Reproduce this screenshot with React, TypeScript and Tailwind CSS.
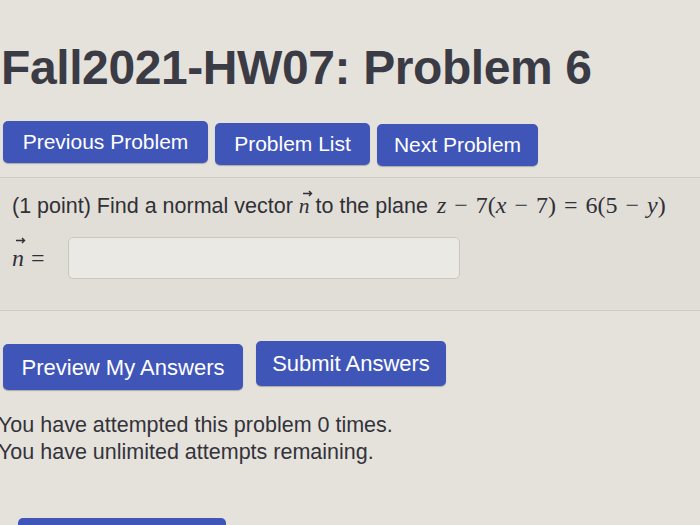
import React from "react";

const btn =
  "rounded-[5px] bg-[#3f56b8] text-white font-['Liberation_Sans',Arial,sans-serif] shadow-[0_1px_1px_rgba(0,0,0,0.25)]";

function Vec() {
  return (
    <span className="relative inline-block font-['Liberation_Serif',serif] italic">
      n
      <svg
        className="absolute left-[3px] top-[-3px]"
        width="11"
        height="7"
        viewBox="0 0 11 7"
        fill="none"
        stroke="currentColor"
        strokeWidth="1.4"
      >
        <path d="M1 3.5h8.5M7 1l2.5 2.5L7 6" />
      </svg>
    </span>
  );
}

function Op({ children }: { children: React.ReactNode }) {
  return <span className="mx-[8px]">{children}</span>;
}

export default function App() {
  return (
    <div className="h-[525px] w-[700px] overflow-hidden bg-[#e5e2dc] font-['Liberation_Sans',Arial,sans-serif] text-[#2f2f36]">
      <h1 className="ml-[1px] mt-[40px] text-[48px] font-bold leading-[56px] tracking-[-0.4px] text-[#3b3b45]">
        Fall2021-HW07: Problem 6
      </h1>

      <div className="mt-[25px] flex gap-[7px] pl-[3px]">
        <button className={`${btn} h-[42px] w-[205px] text-[21px]`}>Previous Problem</button>
        <button className={`${btn} mt-[2px] h-[42px] w-[155px] text-[21px]`}>Problem List</button>
        <button className={`${btn} mt-[3px] h-[42px] w-[161px] text-[21px]`}>Next Problem</button>
      </div>

      <div className="mt-[11px] h-[134px] border-y border-[#cfccc6] bg-[#e1ded8] pl-[12px] pt-[14px]">
        <p className="whitespace-nowrap text-[21.5px] leading-[26px] text-[#303036]">
          (1 point) Find a normal vector <Vec /> to the plane{" "}
          <span className="ml-[3px] font-['Liberation_Serif',serif] text-[24px]">
            <i>z</i>
            <Op>−</Op>7(<i>x</i>
            <Op>−</Op>7)
            <Op>=</Op>6(5
            <Op>−</Op>
            <i>y</i>)
          </span>
        </p>
        <div className="mt-[18px] flex items-center gap-[23px]">
          <span className="font-['Liberation_Serif',serif] text-[24px]">
            <Vec />
            <span className="ml-[7px]">=</span>
          </span>
          <div className="h-[42px] w-[392px] rounded-[5px] border border-[#c9c6c0] bg-[#ebe9e4]" />
        </div>
      </div>

      <div className="mt-[30px] flex items-start gap-[13px] pl-[3px]">
        <button className={`${btn} mt-[3px] h-[46px] w-[240px] text-[22px]`}>Preview My Answers</button>
        <button className={`${btn} h-[45px] w-[190px] text-[22px]`}>Submit Answers</button>
      </div>

      <div className="mt-[22px] whitespace-nowrap text-[21.5px] leading-[27px] text-[#33333a]">
        <p className="ml-[-2px]">You have attempted this problem 0 times.</p>
        <p className="ml-[-2px]">You have unlimited attempts remaining.</p>
      </div>

      <div className="ml-[18px] mt-[52px] h-[20px] w-[208px] rounded-t-[5px] bg-[#3f56b8]" />
    </div>
  );
}
